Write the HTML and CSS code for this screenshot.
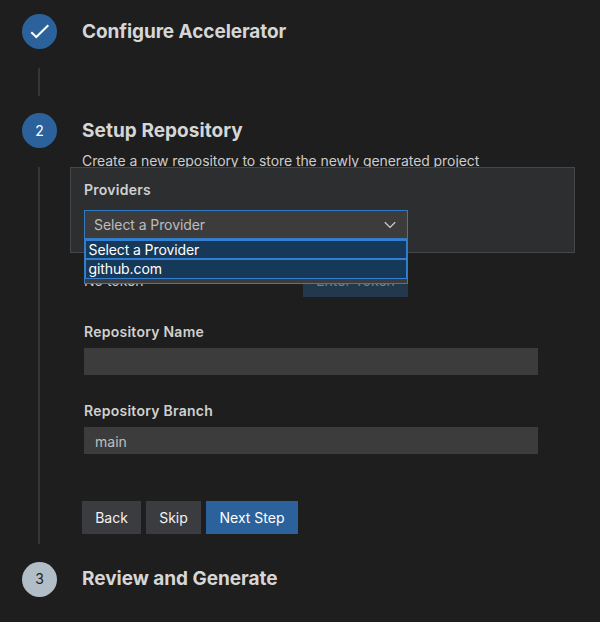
FILE: index.html
```html
<!DOCTYPE html>
<html lang="en">
<head>
<meta charset="utf-8">
<title>Setup Repository</title>
<link rel="stylesheet" href="styles.css">
</head>
<body>
<main class="stepper">
  <section class="step step-done">
    <div class="rail">
      <span class="marker"><svg class="check" viewBox="0 0 20 16"><path d="M1.300 8.200 6.300 13 18.300 1.200"/></svg></span>
      <span class="line"></span>
    </div>
    <div class="content"><h2 class="title title-configure">Configure Accelerator</h2></div>
  </section>
  <section class="step step-current">
    <div class="rail">
      <span class="marker">2</span>
      <span class="line"></span>
    </div>
    <div class="content">
      <h2 class="title title-setup">Setup Repository</h2>
      <p class="description">Create a new repository to store the newly generated project</p>
      <div class="card">
        <div class="label label-providers">Providers</div>
        <div class="dropdown">
          <div class="select"><span>Select a Provider</span><svg class="chevron" viewBox="0 0 12 8"><path d="M.8 1.200 6 6.400l5.200-5.200"/></svg></div>
          <ul class="options">
            <li class="option">Select a Provider</li>
            <li class="option">github.com</li>
          </ul>
        </div>
      </div>
      <div class="token"><span class="token-text">No token</span><button class="button primary disabled">Enter Token</button></div>
      <div class="field">
        <label class="label" for="name">Repository Name</label>
        <input class="input" id="name" type="text">
      </div>
      <div class="field">
        <label class="label" for="branch">Repository Branch</label>
        <input class="input" id="branch" type="text" value="main">
      </div>
      <div class="actions">
        <button class="button back">Back</button>
        <button class="button skip">Skip</button>
        <button class="button primary next">Next Step</button>
      </div>
    </div>
  </section>
  <section class="step step-pending">
    <div class="rail"><span class="marker">3</span></div>
    <div class="content"><h2 class="title title-review">Review and Generate</h2></div>
  </section>
</main>
</body>
</html>
```
FILE: styles.css
```css
* { box-sizing: border-box; }
body {
  margin: 0;
  background: #1e1e1e;
  color: #cccccc;
  font: 14px/20px Inter, "Liberation Sans", sans-serif;
}
.stepper { height: 622px; padding: 14.300px 0 0 22px; overflow: hidden; }
.step { display: grid; grid-template-columns: 60px 1fr; }
.step-done { height: 99px; }
.step-current { height: 448.500px; }
.rail { display: flex; flex-direction: column; }
.marker {
  display: flex; align-items: center; justify-content: center;
  flex: none;
  width: 35px; height: 35px; border-radius: 50%;
  background: #2c629b; color: #fff; font-size: 14px;
}
.step-pending .marker { background: #b1bdc7; color: #1e1e1e; }
.check { width: 20px; height: 16px; fill: none; stroke: #fff; stroke-width: 2; }
.line { flex: 1; width: 2px; margin: 18.500px 0 17.500px 16px; background: #363637; }
.content { padding-top: 4.500px; }
.title { margin: 0; font-size: 19px; line-height: 26px; font-weight: 700; color: #d6d6d6; }
.title-configure { letter-spacing: -.08px; }
.title-setup { letter-spacing: .06px; }
.title-review { letter-spacing: -.03px; }
.description { margin: 6.700px 0 0; height: 16.500px; line-height: 21px; white-space: nowrap; letter-spacing: -.08px; }
.card {
  position: relative;
  width: 505px; height: 86px; margin-left: -12px; padding: 12px 13px;
  background: #2d2e30; border: 1px solid #454749;
}
.label { display: block; font-weight: 600; line-height: 20px; font-size: 14px; letter-spacing: .25px; color: #d0d0d0; }
.field .label { padding-top: 1px; line-height: 19px; }
.dropdown { position: relative; width: 324px; margin-top: 10px; }
.select {
  display: flex; align-items: center; justify-content: space-between;
  height: 30px; padding: 0 11px 0 9px;
  background: #3c3c3c; border: 1px solid #317ac6; color: #bcbcbc; letter-spacing: -.08px;
}
.chevron { width: 12px; height: 8px; fill: none; stroke: #ccc; stroke-width: 1.300; }
.options {
  position: absolute; top: 28px; left: 0; z-index: 1;
  width: 324px; height: 46px; margin: 0; padding: 0; list-style: none;
  background: #3c3c3c; border: 1px solid #317ac6;
}
.option {
  height: 21px; padding-left: 2.500px; line-height: 17px; letter-spacing: -.1px;
  background: #163859; border: 1px solid #3180d4; border-width: 2px 1px; color: #fff;
}
.option + .option { height: 19px; border-top: 0; line-height: 17px; border-bottom-width: 1px; }
.token { display: flex; justify-content: space-between; align-items: center; width: 324px; height: 33px; margin: 11px 0 0 2px; }
.token-text { padding-top: 2px; }
.button {
  height: 33px; padding: 0; border: 0;
  background: #3a3c40; color: #f2f2f2; font: inherit;
}
.primary { background: #2b629b; color: #fff; }
.disabled { width: 105px; padding-top: 1px; background: #24384d; color: #77818b; }
.field { margin: 0 0 25.500px 2px; }
.token + .field { margin-top: 24px; }
.input {
  display: block; width: 454px; height: 27px; margin-top: 7px; padding: 1px 11px 0;
  background: #3c3c3c; border: 0; outline: 0; border-radius: 0; color: #bfbfbf; font: inherit;
}
.actions { display: flex; gap: 5px; margin-top: 47px; }
.back { width: 59px; }
.skip { width: 55px; }
.next { width: 92px; }
```
